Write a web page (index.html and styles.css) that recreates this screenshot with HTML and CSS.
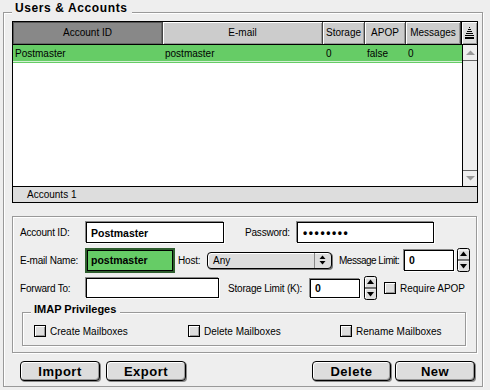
FILE: index.html
```html
<!DOCTYPE html>
<html lang="en">
<head>
    <meta charset="UTF-8">
    <meta name="viewport" content="width=device-width, initial-scale=1.0">
    <title>Users &amp; Accounts</title>
    <link rel="stylesheet" href="styles.css">
</head>
<body>
    <div class="group">
        <div class="group-title">Users &amp; Accounts</div>

        <div class="list">
            <div class="list-head">
                <div class="col col-id sorted">Account ID</div>
                <div class="col col-mail">E-mail</div>
                <div class="col col-store">Storage</div>
                <div class="col col-apop">APOP</div>
                <div class="col col-msg">Messages</div>
                <div class="col col-sort">
                    <svg width="9" height="12" viewBox="0 0 9 12">
                        <rect x="4" y="0" width="1" height="1" fill="#000"/>
                        <rect x="3" y="2" width="3" height="1" fill="#000"/>
                        <rect x="2" y="4" width="5" height="1" fill="#000"/>
                        <rect x="1" y="6" width="7" height="1" fill="#000"/>
                        <rect x="0" y="8" width="9" height="1" fill="#000"/>
                        <rect x="0" y="10" width="9" height="2" fill="#000"/>
                    </svg>
                </div>
            </div>
            <div class="list-body">
                <div class="rows">
                    <div class="row selected">
                        <span class="cell col-id">Postmaster</span>
                        <span class="cell col-mail">postmaster</span>
                        <span class="cell col-store">0</span>
                        <span class="cell col-apop">false</span>
                        <span class="cell">0</span>
                    </div>
                </div>
                <div class="scrollbar">
                    <div class="scroll-btn">
                        <svg width="9" height="5" viewBox="0 0 9 5"><path d="M0 5 L4.5 0.5 L9 5 Z" fill="#999"/></svg>
                    </div>
                    <div class="scroll-track"></div>
                    <div class="scroll-btn down">
                        <svg width="9" height="5" viewBox="0 0 9 5"><path d="M0 0 L4.5 4.5 L9 0 Z" fill="#999"/></svg>
                    </div>
                </div>
            </div>
            <div class="list-status">Accounts 1</div>
        </div>

        <div class="details">
            <div class="form-row row-1">
                <label class="lbl w-66" for="account">Account ID:</label>
                <input class="field w-138" id="account" type="text" value="Postmaster">
                <label class="lbl lbl-pass" for="password">Password:</label>
                <input class="field field-pass w-137" id="password" type="text" value="••••••••">
            </div>
            <div class="form-row row-2">
                <label class="lbl w-65" for="email">E-mail Name:</label>
                <input class="field focused" id="email" type="text" value="postmaster">
                <label class="lbl lbl-host">Host:</label>
                <div class="popup">
                    <span class="popup-text">Any</span>
                    <span class="popup-arrows">
                        <svg width="7" height="10" viewBox="0 0 7 10">
                            <path d="M3.5 0.5 L6.5 4 H0.5 Z" fill="#000"/>
                            <path d="M3.5 9.5 L6.5 6 H0.5 Z" fill="#000"/>
                        </svg>
                    </span>
                </div>
                <label class="lbl lbl-msg" for="msglimit">Message Limit:</label>
                <input class="field w-50" id="msglimit" type="text" value="0">
                <span class="stepper s-msg">
                    <svg width="13" height="24" viewBox="0 0 13 24">
                        <rect x="0.5" y="0.5" width="12" height="23" rx="2" fill="#ddd" stroke="#000"/>
                        <path d="M1.5 11 V2 H11" stroke="#fff" fill="none"/>
                        <path d="M1.5 22 V13 H11" stroke="#fff" fill="none"/>
                        <line x1="0" y1="12" x2="13" y2="12" stroke="#000"/>
                        <path d="M6.5 3.5 L10 8 H3 Z" fill="#000"/>
                        <path d="M6.5 20.5 L10 16 H3 Z" fill="#000"/>
                    </svg>
                </span>
            </div>
            <div class="form-row row-3">
                <label class="lbl w-66" for="forward">Forward To:</label>
                <input class="field w-133" id="forward" type="text" value="">
                <label class="lbl lbl-store" for="storelimit">Storage Limit (K):</label>
                <input class="field field-short w-50" id="storelimit" type="text" value="0">
                <span class="stepper s-store">
                    <svg width="13" height="24" viewBox="0 0 13 24">
                        <rect x="0.5" y="0.5" width="12" height="23" rx="2" fill="#ddd" stroke="#000"/>
                        <path d="M1.5 11 V2 H11" stroke="#fff" fill="none"/>
                        <path d="M1.5 22 V13 H11" stroke="#fff" fill="none"/>
                        <line x1="0" y1="12" x2="13" y2="12" stroke="#000"/>
                        <path d="M6.5 3.5 L10 8 H3 Z" fill="#000"/>
                        <path d="M6.5 20.5 L10 16 H3 Z" fill="#000"/>
                    </svg>
                </span>
                <span class="check check-apop"></span>
                <span class="check-label">Require APOP</span>
            </div>

            <div class="imap">
                <div class="imap-title">IMAP Privileges</div>
                <div class="imap-row">
                    <div class="imap-item w-154"><span class="check"></span><span class="check-label">Create Mailboxes</span></div>
                    <div class="imap-item w-152"><span class="check"></span><span class="check-label">Delete Mailboxes</span></div>
                    <div class="imap-item"><span class="check"></span><span class="check-label">Rename Mailboxes</span></div>
                </div>
            </div>
        </div>

        <div class="buttons">
            <div class="button-group">
                <button class="btn">Import</button>
                <button class="btn btn-export">Export</button>
            </div>
            <div class="button-group">
                <button class="btn btn-delete">Delete</button>
                <button class="btn btn-new">New</button>
            </div>
        </div>
    </div>
</body>
</html>
```

FILE: styles.css
```css
body {
    margin: 0;
    background: #eeeeee;
    font-family: "Liberation Sans", Arial, sans-serif;
    font-size: 10px;
    color: #000;
}

/* outer etched group box */
.group {
    margin: 12px 0 0 3px;
    width: 480px;
    box-sizing: border-box;
    padding: 0 4px 5px 8px;
    border: 1px solid #999;
    box-shadow: inset 1px 1px 0 #fff, 1px 1px 0 #fff;
}

.group-title {
    width: max-content;
    height: 12px;
    margin: -11px 0 7px 0;
    padding: 0 4px 0 3px;
    background: #eeeeee;
    font-weight: bold;
    font-size: 12px;
    line-height: 12px;
    letter-spacing: 0.6px;
}

/* accounts list */
.list {
    width: 466px;
    box-sizing: border-box;
    border: 1px solid #000;
    background: #fff;
}

.list-head {
    display: flex;
    height: 23px;
    box-sizing: border-box;
    border-bottom: 1px solid #000;
}

.col {
    box-sizing: border-box;
    height: 22px;
    border-right: 1px solid #444;
    background: #cccccc;
    box-shadow: inset 1px 1px 0 #fff, inset -1px -1px 0 #999;
    text-align: center;
    line-height: 22px;
}

.col.sorted {
    background: #888888;
    box-shadow: inset 1px 1px 0 #555, inset -1px -1px 0 #666;
}

.col-id { width: 150px; }
.col-mail { width: 160px; }
.col-store { width: 42px; }
.col-apop { width: 41px; }
.col-msg { width: 55px; }

.col-sort {
    width: 16px;
    border-right: 0;
    border-left: 1px solid #000;
    background: #dddddd;
    display: flex;
    align-items: center;
    justify-content: center;
}

.list-body {
    display: flex;
    height: 141px;
}

.rows {
    width: 449px;
}

.row {
    display: flex;
    height: 18px;
    line-height: 17px;
}

.row.selected {
    background: linear-gradient(to bottom, #66cc66 0 16px, #d4f0d4 16px 17px, #66cc66 17px);
}

.cell {
    box-sizing: border-box;
    padding-left: 2px;
    white-space: nowrap;
}

.cell.col-store {
    padding-left: 3px;
}

.scrollbar {
    width: 15px;
    box-sizing: border-box;
    border-left: 1px solid #000;
    background: #eeeeee;
    display: flex;
    flex-direction: column;
}

.scroll-btn {
    height: 16px;
    box-sizing: border-box;
    border-bottom: 1px solid #666;
    display: flex;
    align-items: center;
    justify-content: center;
}

.scroll-btn.down {
    border-bottom: 0;
    border-top: 1px solid #666;
}

.scroll-track {
    flex: 1;
}

.list-status {
    height: 16px;
    box-sizing: border-box;
    border-top: 1px solid #000;
    background: #dddddd;
    padding-left: 14px;
    line-height: 15px;
}

/* details form */
.details {
    margin-top: 13px;
    width: 465px;
    box-sizing: border-box;
    padding: 5px 0 6px 7px;
    border: 1px solid #999;
    box-shadow: inset 1px 1px 0 #fff, 1px 1px 0 #fff;
}

.form-row {
    display: flex;
    align-items: center;
}

.row-1 { height: 21px; }
.row-2 { height: 26px; margin-top: 4px; }
.row-3 { height: 26px; margin-top: 2px; }

.lbl {
    flex-shrink: 0;
    white-space: nowrap;
    letter-spacing: -0.2px;
}

.w-65 { width: 65px; }
.w-66 { width: 66px; }
.w-50 { width: 50px; }
.w-133 { width: 133px; }
.w-137 { width: 137px; }
.w-138 { width: 138px; }

.lbl-pass { width: 52px; margin-left: 21px; }
.lbl-host { width: 29px; margin-left: 5px; }
.lbl-msg { width: 65px; margin-left: 7px; letter-spacing: -0.5px; }
.lbl-store { width: 82px; margin-left: 9px; }

.field {
    box-sizing: border-box;
    height: 21px;
    margin: 0;
    padding: 0 4px;
    border: 1px solid #000;
    background: #fff;
    box-shadow: -1px -1px 0 #888, 1px 1px 0 #fff;
    font-family: "Liberation Sans", Arial, sans-serif;
    font-weight: bold;
    font-size: 10.5px;
    color: #000;
    outline: none;
}

.row-3 .field {
    height: 20px;
}

.row-3 .field-short {
    height: 19px;
}

.field-pass {
    font-size: 12px;
    letter-spacing: 1.6px;
    padding-left: 5px;
}

.field.focused {
    width: 86px;
    margin-left: 2px;
    padding-left: 3px;
    background: #66cc66;
    box-shadow: 0 0 0 2px #2e5e2e;
}

.popup {
    box-sizing: border-box;
    width: 125px;
    height: 17px;
    display: flex;
    border: 1px solid #000;
    border-radius: 4px;
    background: #dddddd;
    box-shadow: inset 1px 1px 0 #fff, 1px 1px 0 #777;
    line-height: 15px;
}

.popup-text {
    flex: 1;
    padding-left: 5px;
}

.popup-arrows {
    width: 15px;
    margin-right: 1px;
    border-left: 1px solid #888;
    display: flex;
    align-items: center;
    justify-content: center;
}

.stepper {
    display: flex;
    height: 24px;
}

.s-msg { margin-left: 3px; }
.s-store { margin-left: 4px; }

.check {
    flex-shrink: 0;
    box-sizing: border-box;
    width: 12px;
    height: 12px;
    border: 1px solid #000;
    background: #dddddd;
    box-shadow: inset 1px 1px 0 #fff, inset -1px -1px 0 #999;
}

.check-apop {
    margin-left: 7px;
}

.check-label {
    margin-left: 4px;
    white-space: nowrap;
}

/* IMAP privileges group */
.imap {
    margin: 11px 0 0 2px;
    width: 444px;
    box-sizing: border-box;
    padding: 0 0 8px 8px;
    border: 1px solid #999;
    box-shadow: inset 1px 1px 0 #fff, 1px 1px 0 #fff;
}

.imap-title {
    width: max-content;
    height: 11px;
    margin: -9px 0 10px 0;
    padding: 0 4px 0 3px;
    background: #eeeeee;
    font-weight: bold;
    font-size: 11px;
    line-height: 11px;
}

.imap-row {
    display: flex;
    height: 12px;
    padding-left: 3px;
}

.imap-item {
    display: flex;
    align-items: center;
}

.w-154 { width: 154px; }
.w-152 { width: 152px; }

/* bottom buttons */
.buttons {
    display: flex;
    justify-content: space-between;
    margin-top: 8px;
    padding: 0 3px 0 8px;
}

.button-group {
    display: flex;
}

.btn {
    box-sizing: border-box;
    width: 80px;
    height: 20px;
    padding: 0;
    border: 1px solid #000;
    border-radius: 4px;
    background: #dddddd;
    box-shadow: inset 1px 1px 0 #fff, inset -1px -1px 0 #999, 1px 1px 0 #888;
    font-family: "Liberation Sans", Arial, sans-serif;
    font-weight: bold;
    font-size: 13px;
    letter-spacing: 0.5px;
    color: #000;
}

.btn-export { margin-left: 6px; }
.btn-delete { width: 79px; }
.btn-new { margin-left: 4px; }
```
